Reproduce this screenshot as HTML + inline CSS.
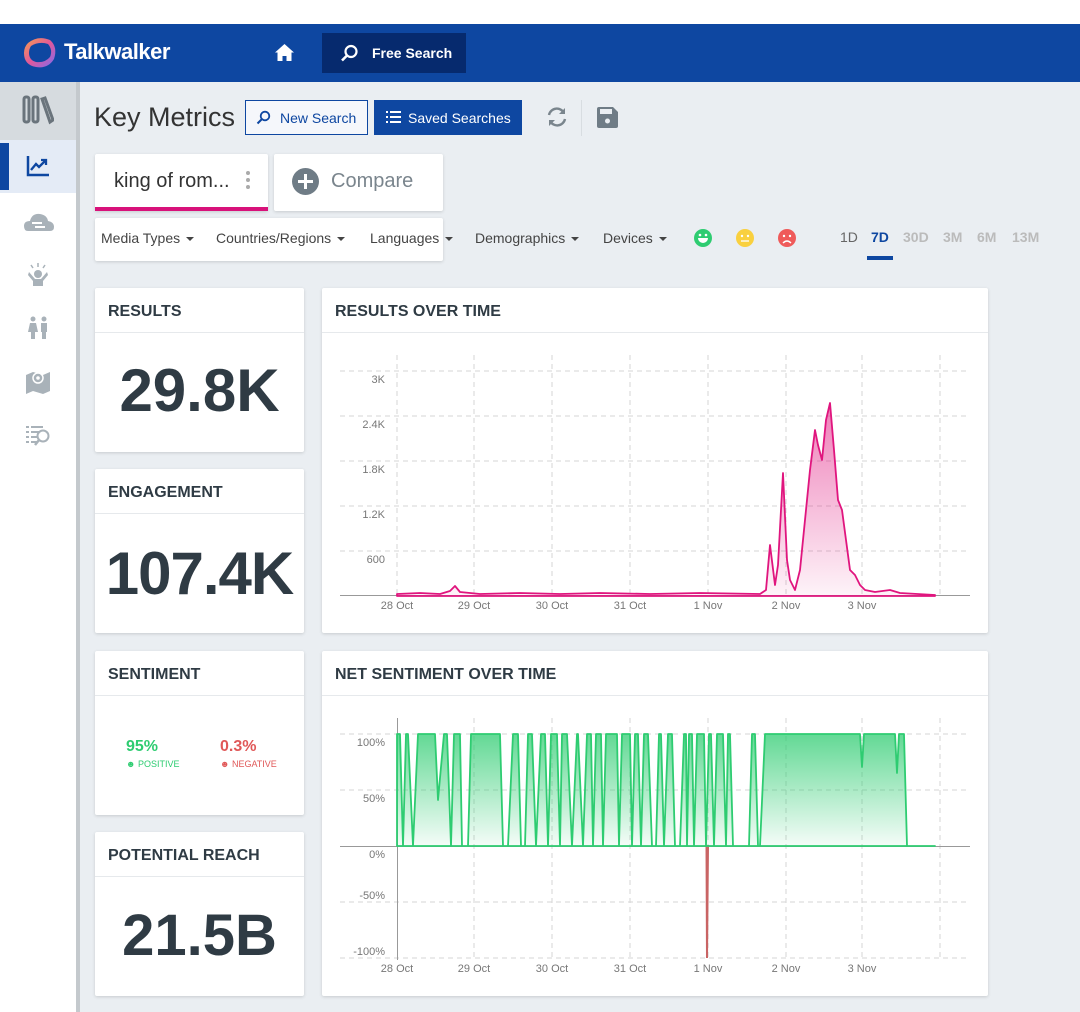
<!DOCTYPE html>
<html><head><meta charset="utf-8"><style>
*{box-sizing:border-box;margin:0;padding:0}
body{width:1080px;height:1012px;overflow:hidden;background:#eaeef2;font-family:"Liberation Sans",sans-serif;position:relative;color:#333}
.abs{position:absolute}
.card{position:absolute;background:#fff;box-shadow:0 1px 3px rgba(0,0,0,.15);border-radius:2px}
.card .h{height:45px;border-bottom:1px solid #e6e9ec;padding:15px 13px;font-size:16px;font-weight:bold;color:#2f3b44}
.big{position:absolute;left:0;right:0;text-align:center;font-weight:bold;color:#2f3b44}
.f{position:absolute;top:230px;font-size:14px;color:#444}
.f:after{content:"";display:inline-block;margin-left:6px;vertical-align:middle;border-left:4px solid transparent;border-right:4px solid transparent;border-top:4px solid #444}
.ax{font-size:11px;fill:#777;font-family:"Liberation Sans",sans-serif}
.tf{position:absolute;top:229px;font-size:14px;color:#bbb;font-weight:bold}
</style></head><body>
<div class="abs" style="left:0;top:0;width:1080px;height:24px;background:#fff"></div>
<div class="abs" style="left:0;top:24px;width:1080px;height:58px;background:#0e47a1"></div>
<svg class="abs" style="left:22px;top:35px" width="36" height="36" viewBox="0 0 36 36">
<defs><linearGradient id="lg" x1="0" y1="0" x2="1" y2="1"><stop offset="0" stop-color="#f7a14a"/><stop offset=".5" stop-color="#e0589b"/><stop offset="1" stop-color="#7d6cf0"/></linearGradient></defs>
<path d="M6 8 Q16 0 28 5 Q36 12 32 24 Q26 34 14 32 Q2 30 2 18 Q2 12 6 8Z" fill="url(#lg)"/>
<path d="M9 11 Q17 6 26 9 Q31 15 28 22 Q23 28 14 27 Q7 25 7 18 Q7 14 9 11Z" fill="#0e47a1"/></svg>
<div class="abs" style="left:64px;top:39px;color:#fff;font-size:22px;font-weight:bold;letter-spacing:-.5px">Talkwalker</div>
<svg class="abs" style="left:275px;top:44px" width="19" height="17" viewBox="0 0 19 17"><path d="M9.5 0L0 8.5h2.5V17h5v-5h4v5h5V8.5H19z" fill="#fff"/></svg>
<div class="abs" style="left:322px;top:33px;width:144px;height:40px;background:#062a6e"></div>
<svg class="abs" style="left:340px;top:44px" width="19" height="19" viewBox="0 0 19 19"><circle cx="11" cy="7.5" r="5.5" fill="none" stroke="#fff" stroke-width="2.2"/><path d="M7 11.5L2 16.5" stroke="#fff" stroke-width="2.6"/></svg>
<div class="abs" style="left:372px;top:45px;color:#fff;font-size:14px;font-weight:bold">Free Search</div>

<div class="abs" style="left:0;top:82px;width:77px;height:930px;background:#fff"></div>
<div class="abs" style="left:76px;top:82px;width:4px;height:930px;background:#c4c9cd"></div>
<div class="abs" style="left:0;top:82px;width:76px;height:58px;background:#d6dbdf"></div>
<div class="abs" style="left:0;top:140px;width:76px;height:53px;background:#e4ebf6"></div>
<div class="abs" style="left:0;top:143px;width:9px;height:47px;background:#0e47a1"></div>
<svg class="abs" style="left:22px;top:95px" width="32" height="30" viewBox="0 0 32 30"><g fill="none" stroke="#6a747c" stroke-width="3"><rect x="2" y="2" width="5" height="25" rx="2"/><rect x="11" y="2" width="5" height="25" rx="2"/><path d="M20 4l3-1 8 22-3 2z"/></g></svg>
<svg class="abs" style="left:26px;top:155px" width="24" height="22" viewBox="0 0 24 22"><path d="M2 1v19h21" fill="none" stroke="#0e47a1" stroke-width="2.5"/><path d="M5 15l5-6 3 3 6-6M15 5h5v5" fill="none" stroke="#0e47a1" stroke-width="2.3"/></svg>
<svg class="abs" style="left:24px;top:211px" width="30" height="22"><path d="M4 20Q0 20 0 15Q0 10 6 10Q8 2 16 3Q23 4 24 10Q30 11 30 16Q30 20 26 20Z" fill="#a9b2b9"/><path d="M8 12h10M11 16h10" stroke="#fff" stroke-width="2"/></svg>
<svg class="abs" style="left:27px;top:263px" width="22" height="24"><circle cx="11" cy="11" r="4" fill="#a9b2b9"/><path d="M2 9l6 7h6l6-7 1 3-5 6v5H6v-5L1 12z" fill="#a9b2b9"/><path d="M11 0v4M4 2l2 3M18 2l-2 3" stroke="#a9b2b9" stroke-width="1.5"/></svg>
<svg class="abs" style="left:28px;top:316px" width="22" height="24"><circle cx="5" cy="3" r="2.5" fill="#a9b2b9"/><circle cx="16" cy="3" r="2.5" fill="#a9b2b9"/><path d="M2 7h6l2 9H7v7H3v-7H0zM13 7h6v9h-1v7h-4v-7h-1z" fill="#a9b2b9"/></svg>
<svg class="abs" style="left:26px;top:370px" width="24" height="24"><path d="M0 5l7-3 10 3 7-3v19l-7 3-10-3-7 3z" fill="#a9b2b9"/><circle cx="12" cy="8" r="5" fill="#a9b2b9" stroke="#fff" stroke-width="1.5"/><circle cx="12" cy="8" r="1.8" fill="#fff"/></svg>
<svg class="abs" style="left:26px;top:425px" width="26" height="22"><path d="M0 2h3M5 2h12M0 7h3M5 7h8M0 12h3M5 12h6M0 17h3M5 17h6" stroke="#a9b2b9" stroke-width="2"/><circle cx="17" cy="11" r="5.5" fill="none" stroke="#a9b2b9" stroke-width="2"/><path d="M13 15l-4 5" stroke="#a9b2b9" stroke-width="2.5"/></svg>

<div class="abs" style="left:94px;top:102px;font-size:27px;color:#333">Key Metrics</div>
<div class="abs" style="left:245px;top:100px;width:123px;height:35px;border:1.5px solid #0e47a1;background:#f5f7fb"></div>
<svg class="abs" style="left:256px;top:110px" width="15" height="15"><circle cx="9" cy="6" r="4.3" fill="none" stroke="#0e47a1" stroke-width="1.8"/><path d="M6 9l-4.5 4.5" stroke="#0e47a1" stroke-width="2"/></svg>
<div class="abs" style="left:280px;top:110px;font-size:14px;color:#0e47a1">New Search</div>
<div class="abs" style="left:374px;top:100px;width:148px;height:35px;background:#0e47a1"></div>
<svg class="abs" style="left:386px;top:111px" width="15" height="12"><path d="M0 1h2M4 1h11M0 6h2M4 6h11M0 11h2M4 11h11" stroke="#fff" stroke-width="2"/></svg>
<div class="abs" style="left:408px;top:110px;font-size:14px;color:#fff">Saved Searches</div>
<svg class="abs" style="left:546px;top:106px" width="22" height="22" viewBox="0 0 22 22"><path d="M3 9A8 8 0 0 1 18 7M19 13A8 8 0 0 1 4 15" fill="none" stroke="#7a858d" stroke-width="2.4"/><path d="M19 2v6h-6zM3 20v-6h6z" fill="#7a858d"/></svg>
<div class="abs" style="left:581px;top:100px;width:1px;height:36px;background:#d8dde1"></div>
<svg class="abs" style="left:597px;top:107px" width="21" height="21"><path d="M0 2Q0 0 2 0h14l5 5v14q0 2-2 2H2q-2 0-2-2z" fill="#6f7c86"/><rect x="3" y="2" width="12" height="5" fill="#eaeef2"/><circle cx="10.5" cy="14" r="2.5" fill="#eaeef2"/></svg>

<div class="card" style="left:95px;top:154px;width:173px;height:57px"></div>
<div class="abs" style="left:95px;top:207px;width:173px;height:4px;background:#d8127a"></div>
<div class="abs" style="left:114px;top:170px;font-size:20px;color:#333">king of rom...</div>
<div class="abs" style="left:246px;top:171px;width:4px;height:4px;border-radius:2px;background:#aaa;box-shadow:0 7px #aaa,0 14px #aaa"></div>
<div class="card" style="left:274px;top:154px;width:169px;height:57px"></div>
<div class="abs" style="left:292px;top:168px;width:27px;height:27px;border-radius:50%;background:#6f7c86"></div>
<div class="abs" style="left:298px;top:180px;width:15px;height:3px;background:#fff"></div>
<div class="abs" style="left:304px;top:174px;width:3px;height:15px;background:#fff"></div>
<div class="abs" style="left:331px;top:170px;font-size:20px;color:#7a858d">Compare</div>

<div class="card" style="left:95px;top:218px;width:348px;height:43px"></div>
<div class="f" style="left:101px">Media Types</div>
<div class="f" style="left:216px">Countries/Regions</div>
<div class="f" style="left:370px">Languages</div>
<div class="f" style="left:475px">Demographics</div>
<div class="f" style="left:603px">Devices</div>
<svg class="abs" style="left:693px;top:228px" width="104" height="20">
<circle cx="10" cy="10" r="9" fill="#2ecc71"/><circle cx="7" cy="7" r="1.3" fill="#fff"/><circle cx="13" cy="7" r="1.3" fill="#fff"/><path d="M5 10h10a5 5 0 0 1-10 0z" fill="#fff"/>
<circle cx="52" cy="10" r="9" fill="#f9d03f"/><circle cx="49" cy="8" r="1.2" fill="#fff"/><circle cx="55" cy="8" r="1.2" fill="#fff"/><path d="M48 13h8" stroke="#fff" stroke-width="1.3"/>
<circle cx="94" cy="10" r="9" fill="#ef5a5a"/><circle cx="91" cy="8" r="1.2" fill="#fff"/><circle cx="97" cy="8" r="1.2" fill="#fff"/><path d="M90 15q4-4 8 0" fill="none" stroke="#fff" stroke-width="1.4"/></svg>
<div class="abs" style="left:840px;top:229px;font-size:14px;color:#666">1D</div>
<div class="abs" style="left:871px;top:229px;font-size:14px;color:#0e47a1;font-weight:bold">7D</div>
<div class="abs" style="left:867px;top:256px;width:26px;height:4px;background:#0e47a1"></div>
<div class="tf" style="left:903px">30D</div><div class="tf" style="left:943px">3M</div><div class="tf" style="left:977px">6M</div><div class="tf" style="left:1012px">13M</div>

<div class="card" style="left:95px;top:288px;width:209px;height:164px"><div class="h">RESULTS</div><div class="big" style="top:68px;font-size:60px">29.8K</div></div>
<div class="card" style="left:95px;top:469px;width:209px;height:164px"><div class="h">ENGAGEMENT</div><div class="big" style="top:70px;font-size:60px;letter-spacing:-1px">107.4K</div></div>
<div class="card" style="left:95px;top:651px;width:209px;height:164px"><div class="h">SENTIMENT</div>
<div class="abs" style="left:31px;top:87px;font-size:16px;font-weight:bold;color:#2ecc71">95%</div>
<div class="abs" style="left:31px;top:108px;font-size:9px;color:#2ecc71">☻ POSITIVE</div>
<div class="abs" style="left:125px;top:87px;font-size:16px;font-weight:bold;color:#e05858">0.3%</div>
<div class="abs" style="left:125px;top:108px;font-size:9px;color:#e05858">☻ NEGATIVE</div></div>
<div class="card" style="left:95px;top:832px;width:209px;height:164px"><div class="h">POTENTIAL REACH</div><div class="big" style="top:70px;font-size:58px">21.5B</div></div>

<div class="card" style="left:322px;top:288px;width:666px;height:345px"><div class="h">RESULTS OVER TIME</div></div>
<div class="card" style="left:322px;top:651px;width:666px;height:345px"><div class="h">NET SENTIMENT OVER TIME</div></div>

<svg class="abs" style="left:0;top:0" width="1080" height="1012">
<defs>
<linearGradient id="pk" x1="0" y1="0" x2="0" y2="1"><stop offset="0" stop-color="#e0157e" stop-opacity=".55"/><stop offset="1" stop-color="#e0157e" stop-opacity=".05"/></linearGradient>
<linearGradient id="gr" x1="0" y1="0" x2="0" y2="1"><stop offset="0" stop-color="#2ecc71" stop-opacity=".75"/><stop offset="1" stop-color="#2ecc71" stop-opacity=".05"/></linearGradient>
</defs>
<g stroke="#d5d5d5" stroke-dasharray="5,4">
<path d="M340 371H970M340 416H970M340 461H970M340 506H970M340 551H970"/>
<path d="M397 355V596M474 355V596M552 355V596M630 355V596M708 355V596M786 355V596M862 355V596M940 355V596"/>
<path d="M340 734H970M340 790H970M340 902H970M340 958H970"/>
<path d="M474 718V960M552 718V960M630 718V960M708 718V960M786 718V960M862 718V960M940 718V960"/>
</g>
<path d="M340 595.5H970M340 846.5H970" stroke="#999"/>
<path d="M397.5 718V960" stroke="#999"/>
<g class="ax" text-anchor="end">
<text x="385" y="383">3K</text><text x="385" y="428">2.4K</text><text x="385" y="473">1.8K</text><text x="385" y="518">1.2K</text><text x="385" y="563">600</text>
<text x="385" y="746">100%</text><text x="385" y="802">50%</text><text x="385" y="858">0%</text><text x="385" y="899">-50%</text><text x="385" y="955">-100%</text>
</g>
<g class="ax" text-anchor="middle">
<text x="397" y="609">28 Oct</text><text x="474" y="609">29 Oct</text><text x="552" y="609">30 Oct</text><text x="630" y="609">31 Oct</text><text x="708" y="609">1 Nov</text><text x="786" y="609">2 Nov</text><text x="862" y="609">3 Nov</text>
<text x="397" y="972">28 Oct</text><text x="474" y="972">29 Oct</text><text x="552" y="972">30 Oct</text><text x="630" y="972">31 Oct</text><text x="708" y="972">1 Nov</text><text x="786" y="972">2 Nov</text><text x="862" y="972">3 Nov</text>
</g>
<path d="M397 594L420 593L440 594L450 591L455 586L460 592L480 594L520 593L560 594L600 593L650 594L700 593L760 594L766 590L770 545L775 585L778 565L783 473L787 560L790 580L795 590L800 570L805 520L810 470L815 430L818 445L822 460L826 420L830 403L834 450L838 500L842 510L846 540L850 570L855 575L860 585L865 590L875 592L890 590L900 593L935 595L935 596L397 596Z" fill="url(#pk)" stroke="#e0157e" stroke-width="1.8" stroke-linejoin="round"/>
<path d="M706.5 846L707 958L708 846Z" fill="#d98a8a" stroke="#c96464" stroke-width="2"/>
<path d="M397 846L397 734L400 734L403 846L406 734L408 734L413 846L418 734L435 734L438 800L444 734L447 734L451 846L454 734L460 734L462 846L468 846L471 734L500 734L503 846L508 846L513 734L518 734L521 846L525 846L528 734L532 734L536 846L541 734L545 734L548 846L551 734L557 734L560 846L562 734L567 734L572 846L577 734L578 734L583 846L587 734L591 734L593 846L596 734L601 734L603 846L606 734L617 734L619 846L622 734L630 734L632 846L635 734L638 734L641 846L644 734L648 734L652 846L656 846L659 734L661 734L664 846L668 734L672 734L675 846L680 846L684 734L686 734L687 846L689 734L692 734L694 846L697 734L704 734L706 846L709 734L711 734L714 846L717 734L723 734L726 846L728 734L730 734L733 846L749 846L752 734L755 734L758 846L760 846L765 734L860 734L862 767L864 734L895 734L897 773L899 734L904 734L907 846L935 846Z" fill="url(#gr)" stroke="#2ecc71" stroke-width="1.8" stroke-linejoin="round"/>
</svg>
</body></html>
